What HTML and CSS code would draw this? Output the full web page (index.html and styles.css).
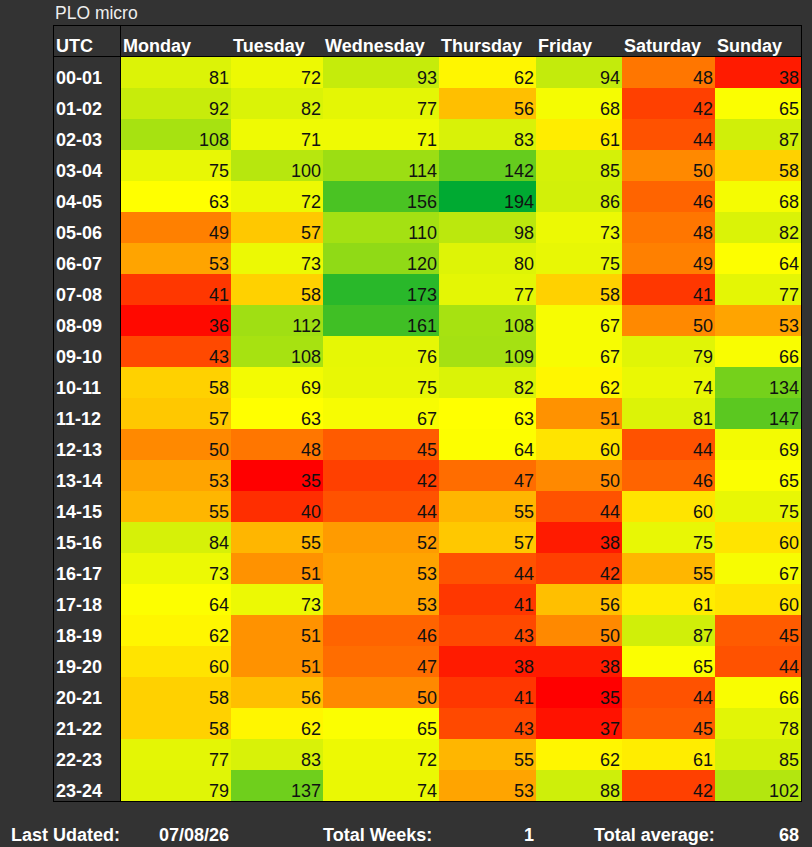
FILE: index.html
```html
<!DOCTYPE html>
<html lang="en">
<head>
<meta charset="utf-8">
<title>PLO micro</title>
<link rel="stylesheet" href="styles.css">
</head>
<body>
<div class="page">
  <div class="title">PLO micro</div>
  <table class="heat">
    <thead>
      <tr>
        <th class="utc c-utc">UTC</th>
        <th class="c-mon">Monday</th>
        <th class="c-tue">Tuesday</th>
        <th class="c-wed">Wednesday</th>
        <th class="c-thu">Thursday</th>
        <th class="c-fri">Friday</th>
        <th class="c-sat">Saturday</th>
        <th class="c-sun">Sunday</th>
      </tr>
    </thead>
    <tbody>
      <tr><th class="utc">00-01</th><td>81</td><td>72</td><td>93</td><td>62</td><td>94</td><td>48</td><td>38</td></tr>
      <tr><th class="utc">01-02</th><td>92</td><td>82</td><td>77</td><td>56</td><td>68</td><td>42</td><td>65</td></tr>
      <tr><th class="utc">02-03</th><td>108</td><td>71</td><td>71</td><td>83</td><td>61</td><td>44</td><td>87</td></tr>
      <tr><th class="utc">03-04</th><td>75</td><td>100</td><td>114</td><td>142</td><td>85</td><td>50</td><td>58</td></tr>
      <tr><th class="utc">04-05</th><td>63</td><td>72</td><td>156</td><td>194</td><td>86</td><td>46</td><td>68</td></tr>
      <tr><th class="utc">05-06</th><td>49</td><td>57</td><td>110</td><td>98</td><td>73</td><td>48</td><td>82</td></tr>
      <tr><th class="utc">06-07</th><td>53</td><td>73</td><td>120</td><td>80</td><td>75</td><td>49</td><td>64</td></tr>
      <tr><th class="utc">07-08</th><td>41</td><td>58</td><td>173</td><td>77</td><td>58</td><td>41</td><td>77</td></tr>
      <tr><th class="utc">08-09</th><td>36</td><td>112</td><td>161</td><td>108</td><td>67</td><td>50</td><td>53</td></tr>
      <tr><th class="utc">09-10</th><td>43</td><td>108</td><td>76</td><td>109</td><td>67</td><td>79</td><td>66</td></tr>
      <tr><th class="utc">10-11</th><td>58</td><td>69</td><td>75</td><td>82</td><td>62</td><td>74</td><td>134</td></tr>
      <tr><th class="utc">11-12</th><td>57</td><td>63</td><td>67</td><td>63</td><td>51</td><td>81</td><td>147</td></tr>
      <tr><th class="utc">12-13</th><td>50</td><td>48</td><td>45</td><td>64</td><td>60</td><td>44</td><td>69</td></tr>
      <tr><th class="utc">13-14</th><td>53</td><td>35</td><td>42</td><td>47</td><td>50</td><td>46</td><td>65</td></tr>
      <tr><th class="utc">14-15</th><td>55</td><td>40</td><td>44</td><td>55</td><td>44</td><td>60</td><td>75</td></tr>
      <tr><th class="utc">15-16</th><td>84</td><td>55</td><td>52</td><td>57</td><td>38</td><td>75</td><td>60</td></tr>
      <tr><th class="utc">16-17</th><td>73</td><td>51</td><td>53</td><td>44</td><td>42</td><td>55</td><td>67</td></tr>
      <tr><th class="utc">17-18</th><td>64</td><td>73</td><td>53</td><td>41</td><td>56</td><td>61</td><td>60</td></tr>
      <tr><th class="utc">18-19</th><td>62</td><td>51</td><td>46</td><td>43</td><td>50</td><td>87</td><td>45</td></tr>
      <tr><th class="utc">19-20</th><td>60</td><td>51</td><td>47</td><td>38</td><td>38</td><td>65</td><td>44</td></tr>
      <tr><th class="utc">20-21</th><td>58</td><td>56</td><td>50</td><td>41</td><td>35</td><td>44</td><td>66</td></tr>
      <tr><th class="utc">21-22</th><td>58</td><td>62</td><td>65</td><td>43</td><td>37</td><td>45</td><td>78</td></tr>
      <tr><th class="utc">22-23</th><td>77</td><td>83</td><td>72</td><td>55</td><td>62</td><td>61</td><td>85</td></tr>
      <tr><th class="utc">23-24</th><td>79</td><td>137</td><td>74</td><td>53</td><td>88</td><td>42</td><td>102</td></tr>
    </tbody>
  </table>
  <div class="footer">
    <span class="f-label">Last Udated:</span>
    <span class="f-value">07/08/26</span>
    <span class="f-gap"></span>
    <span class="f-label">Total Weeks:</span>
    <span class="f-value">1</span>
    <span class="f-gap"></span>
    <span class="f-label">Total average:</span>
    <span class="f-value">68</span>
  </div>
</div>
<script src="script.js"></script>
</body>
</html>
```

FILE: styles.css
```css
html, body {
  margin: 0;
  padding: 0;
  background: #333333;
}

.page {
  font-family: "Liberation Sans", Arial, sans-serif;
  color: #ffffff;
  width: 812px;
  height: 847px;
}

.title {
  height: 25px;
  padding-left: 55px;
  font-size: 17.5px;
  line-height: 25px;
  color: #eeeeee;
  box-sizing: border-box;
  padding-top: 1px;
}

.heat {
  margin-left: 53px;
  border-collapse: separate;
  border-spacing: 0;
  border: 1px solid #000000;
  table-layout: fixed;
  width: 749px;
}

.heat th,
.heat td {
  box-sizing: border-box;
  padding: 0 2px 0 2px;
  vertical-align: bottom;
  white-space: nowrap;
  overflow: hidden;
}

.heat thead th {
  height: 31px;
  border-bottom: 1px solid #000000;
  font-size: 18px;
  font-weight: bold;
  line-height: 20px;
  text-align: left;
  color: #ffffff;
  padding-bottom: 0;
}

.heat tbody th,
.heat tbody td {
  height: 31px;
  line-height: 20px;
}

.heat .utc {
  border-right: 1px solid #000000;
  text-align: left;
  font-weight: bold;
  font-size: 18px;
  color: #ffffff;
}

.heat td {
  font-size: 18px;
  color: #111111;
  text-align: right;
}

.c-utc { width: 67px; }
.c-mon { width: 110px; }
.c-tue { width: 92px; }
.c-wed { width: 116px; }
.c-thu { width: 97px; }
.c-fri { width: 86px; }
.c-sat { width: 93px; }
.c-sun { width: 86px; }

.footer {
  display: grid;
  grid-template-columns: 139px 81px 92px 127px 86px 58px 130px 77px;
  padding-left: 11px;
  margin-top: 21px;
  font-size: 18px;
  font-weight: bold;
  line-height: 24px;
  color: #ffffff;
  white-space: nowrap;
}

.f-label {
  text-align: left;
}

.f-value {
  text-align: right;
  padding-right: 2px;
}

.f-gap {
  display: block;
}
```

FILE: script.js
```js
(function () {
  var MIN = 35, MID = 63, MAX = 194;
  function heat(v) {
    var r, g, b, t;
    if (v <= MID) {
      t = Math.max(0, (v - MIN) / (MID - MIN));
      r = 255; g = Math.round(255 * t); b = 0;
    } else {
      t = Math.min(1, (v - MID) / (MAX - MID));
      r = Math.round(255 * (1 - t));
      g = Math.round(255 - 85 * t);
      b = Math.round(50 * t);
    }
    return "rgb(" + r + "," + g + "," + b + ")";
  }
  var cells = document.querySelectorAll(".heat tbody td");
  for (var i = 0; i < cells.length; i++) {
    var v = parseFloat(cells[i].textContent);
    cells[i].style.backgroundColor = heat(v);
  }
})();
```
